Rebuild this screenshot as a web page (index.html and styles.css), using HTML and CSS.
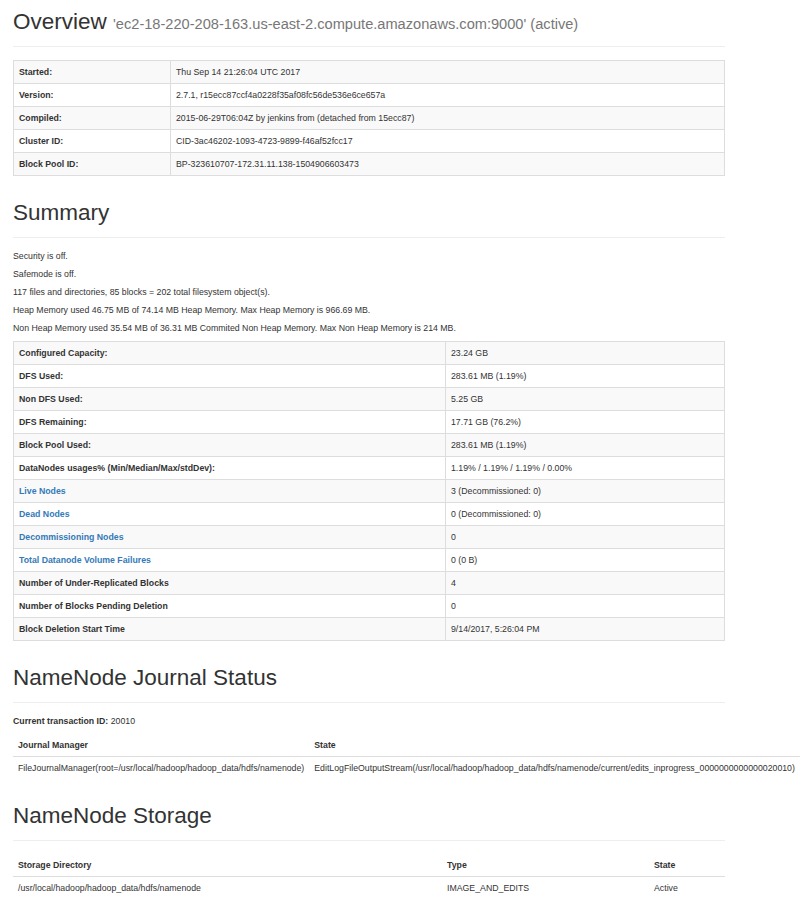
FILE: index.html
```html
<!DOCTYPE html>
<html lang="en">
<head>
<meta charset="utf-8">
<title>Namenode information</title>
<link rel="stylesheet" href="styles.css">
</head>
<body>
<div class="container">

  <div class="page-header page-header-first">
    <h1>Overview <small>'ec2-18-220-208-163.us-east-2.compute.amazonaws.com:9000' (active)</small></h1>
  </div>

  <table class="table table-bordered table-striped table-overview">
    <tr><th>Started:</th><td>Thu Sep 14 21:26:04 UTC 2017</td></tr>
    <tr><th>Version:</th><td>2.7.1, r15ecc87ccf4a0228f35af08fc56de536e6ce657a</td></tr>
    <tr><th>Compiled:</th><td>2015-06-29T06:04Z by jenkins from (detached from 15ecc87)</td></tr>
    <tr><th>Cluster ID:</th><td>CID-3ac46202-1093-4723-9899-f46af52fcc17</td></tr>
    <tr><th>Block Pool ID:</th><td>BP-323610707-172.31.11.138-1504906603473</td></tr>
  </table>

  <div class="page-header">
    <h1>Summary</h1>
  </div>

  <p>Security is off.</p>
  <p>Safemode is off.</p>
  <p>117 files and directories, 85 blocks = 202 total filesystem object(s).</p>
  <p>Heap Memory used 46.75 MB of 74.14 MB Heap Memory. Max Heap Memory is 966.69 MB.</p>
  <p class="last">Non Heap Memory used 35.54 MB of 36.31 MB Commited Non Heap Memory. Max Non Heap Memory is 214 MB.</p>

  <table class="table table-bordered table-striped table-summary">
    <tr><th>Configured Capacity:</th><td>23.24 GB</td></tr>
    <tr><th>DFS Used:</th><td>283.61 MB (1.19%)</td></tr>
    <tr><th>Non DFS Used:</th><td>5.25 GB</td></tr>
    <tr><th>DFS Remaining:</th><td>17.71 GB (76.2%)</td></tr>
    <tr><th>Block Pool Used:</th><td>283.61 MB (1.19%)</td></tr>
    <tr><th>DataNodes usages% (Min/Median/Max/stdDev):</th><td>1.19% / 1.19% / 1.19% / 0.00%</td></tr>
    <tr><th><a href="#tab-datanode">Live Nodes</a></th><td>3 (Decommissioned: 0)</td></tr>
    <tr><th><a href="#tab-datanode">Dead Nodes</a></th><td>0 (Decommissioned: 0)</td></tr>
    <tr><th><a href="#tab-datanode">Decommissioning Nodes</a></th><td>0</td></tr>
    <tr><th><a href="#tab-datanode-volume-failures">Total Datanode Volume Failures</a></th><td>0 (0 B)</td></tr>
    <tr><th>Number of Under-Replicated Blocks</th><td>4</td></tr>
    <tr><th>Number of Blocks Pending Deletion</th><td>0</td></tr>
    <tr><th>Block Deletion Start Time</th><td>9/14/2017, 5:26:04 PM</td></tr>
  </table>

  <div class="page-header">
    <h1>NameNode Journal Status</h1>
  </div>

  <p class="txid"><b>Current transaction ID:</b> 20010</p>

  <table class="table table-journal">
    <thead>
      <tr><th>Journal Manager</th><th>State</th></tr>
    </thead>
    <tbody>
      <tr>
        <td>FileJournalManager(root=/usr/local/hadoop/hadoop_data/hdfs/namenode)</td>
        <td>EditLogFileOutputStream(/usr/local/hadoop/hadoop_data/hdfs/namenode/current/edits_inprogress_0000000000000020010)</td>
      </tr>
    </tbody>
  </table>

  <div class="page-header">
    <h1>NameNode Storage</h1>
  </div>

  <table class="table table-storage">
    <thead>
      <tr><th class="col-dir">Storage Directory</th><th class="col-type">Type</th><th>State</th></tr>
    </thead>
    <tbody>
      <tr><td>/usr/local/hadoop/hadoop_data/hdfs/namenode</td><td>IMAGE_AND_EDITS</td><td>Active</td></tr>
    </tbody>
  </table>

</div>
</body>
</html>
```

FILE: styles.css
```css
html, body {
  margin: 0;
  padding: 0;
  background: #fff;
}

body {
  font-family: "Liberation Sans", Arial, Helvetica, sans-serif;
  font-size: 8.75px;
  line-height: 12px;
  color: #333;
}

.container {
  width: 712px;
  padding: 9px 0 0 13px;
}

a {
  color: #337ab7;
  text-decoration: none;
}

.page-header {
  margin: 24px 0 12px;
  padding-bottom: 6px;
  border-bottom: 1px solid #eee;
}

.page-header-first {
  margin-top: 0;
  margin-bottom: 13px;
}

h1 {
  margin: 0 0 6px;
  font-size: 22.5px;
  line-height: 25px;
  font-weight: 500;
  color: #333;
}

h1 small {
  font-size: 65%;
  line-height: 1;
  font-weight: 400;
  color: #777;
}

p {
  margin: 0 0 6px;
}

p.last {
  margin-bottom: 7px;
}

.txid b {
  font-weight: 700;
}

.table {
  width: 100%;
  border-collapse: collapse;
  border-spacing: 0;
  margin-bottom: 12px;
}

.table th,
.table td {
  padding: 5px;
  text-align: left;
  vertical-align: top;
  line-height: 12px;
}

.table th {
  font-weight: 700;
}

.table td {
  font-weight: 400;
}

.table-bordered,
.table-bordered th,
.table-bordered td {
  border: 1px solid #ddd;
}

.table-striped tr:nth-child(odd) {
  background-color: #f9f9f9;
}

.table-overview th {
  width: 146px;
}

.table-summary th {
  width: 421px;
}

.table-journal thead th,
.table-storage thead th {
  padding-top: 6px;
  border-bottom: 1px solid #ddd;
}

.table-journal tbody td,
.table-storage tbody td {
  border-top: 1px solid #ddd;
}

.table-journal th,
.table-journal td {
  white-space: nowrap;
}

.table-storage .col-dir {
  width: 419px;
}

.table-storage .col-type {
  width: 197px;
}
```
